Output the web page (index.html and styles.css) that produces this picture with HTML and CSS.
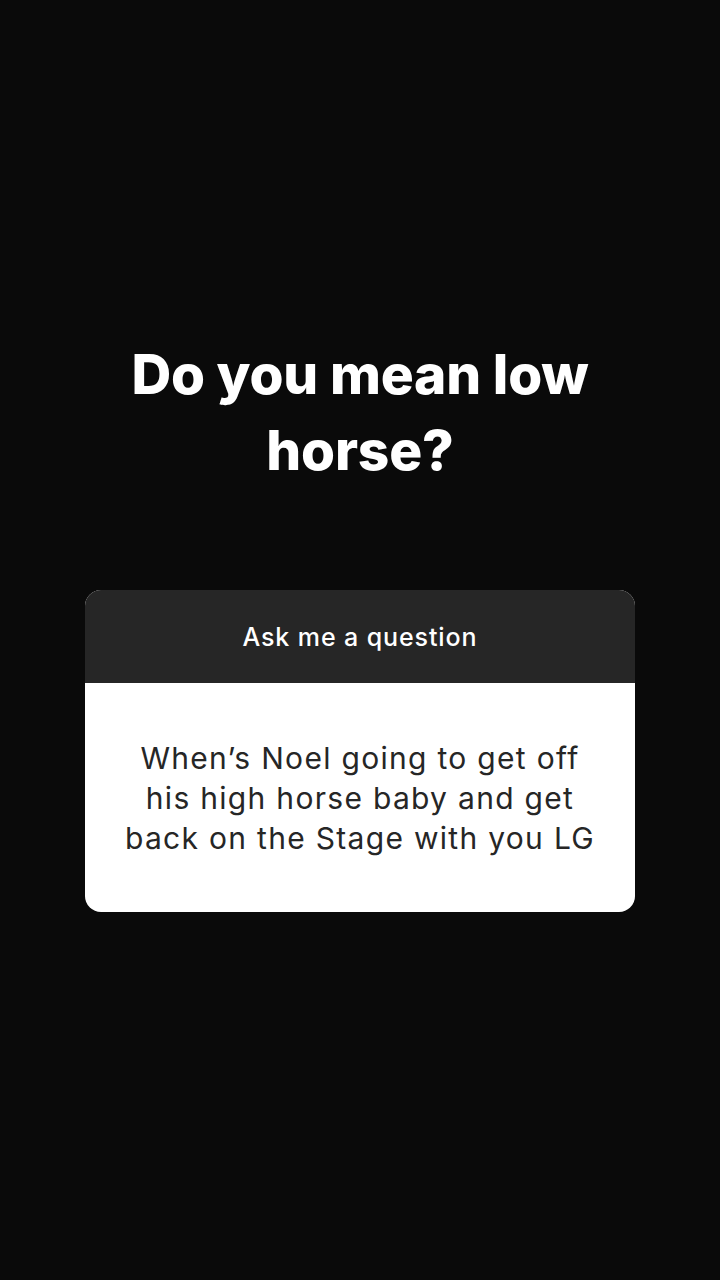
FILE: index.html
```html
<!DOCTYPE html>
<html lang="en">
<head>
<meta charset="utf-8">
<link rel="stylesheet" href="styles.css">
</head>
<body>
<main class="story">
  <h1 class="title">Do you mean low<br>horse?</h1>
  <section class="card">
    <header class="card-head">Ask me a question</header>
    <div class="card-body">
      <p class="question">When’s Noel going to get off<br>his high horse baby and get<br>back on the Stage with you LG</p>
    </div>
  </section>
</main>
</body>
</html>
```
FILE: styles.css
```css
html, body {
  margin: 0;
  padding: 0;
  background: #0a0a0a;
}
.story {
  width: 720px;
  height: 1280px;
  display: flex;
  flex-direction: column;
  align-items: center;
  padding-top: 336px;
  box-sizing: border-box;
}
.title {
  margin: 0;
  font-family: Inter, "Noto Sans", sans-serif;
  font-weight: 800;
  font-size: 55px;
  line-height: 76px;
  letter-spacing: -0.2px;
  color: #ffffff;
  text-align: center;
}
.card {
  margin-top: 102px;
  width: 550px;
  border-radius: 16px;
  overflow: hidden;
  background: #ffffff;
}
.card-head {
  height: 93px;
  background: #262626;
  color: #ffffff;
  font-family: Inter, "Noto Sans", sans-serif;
  font-weight: 500;
  font-size: 25px;
  letter-spacing: 0.9px;
  display: flex;
  align-items: center;
  justify-content: center;
}
.card-body {
  height: 229px;
  display: flex;
  align-items: center;
  justify-content: center;
}
.question {
  margin: 0;
  font-family: Inter, "Noto Sans", sans-serif;
  font-weight: 400;
  font-size: 30px;
  line-height: 40px;
  letter-spacing: 1.3px;
  color: #262626;
  text-align: center;
}
```
